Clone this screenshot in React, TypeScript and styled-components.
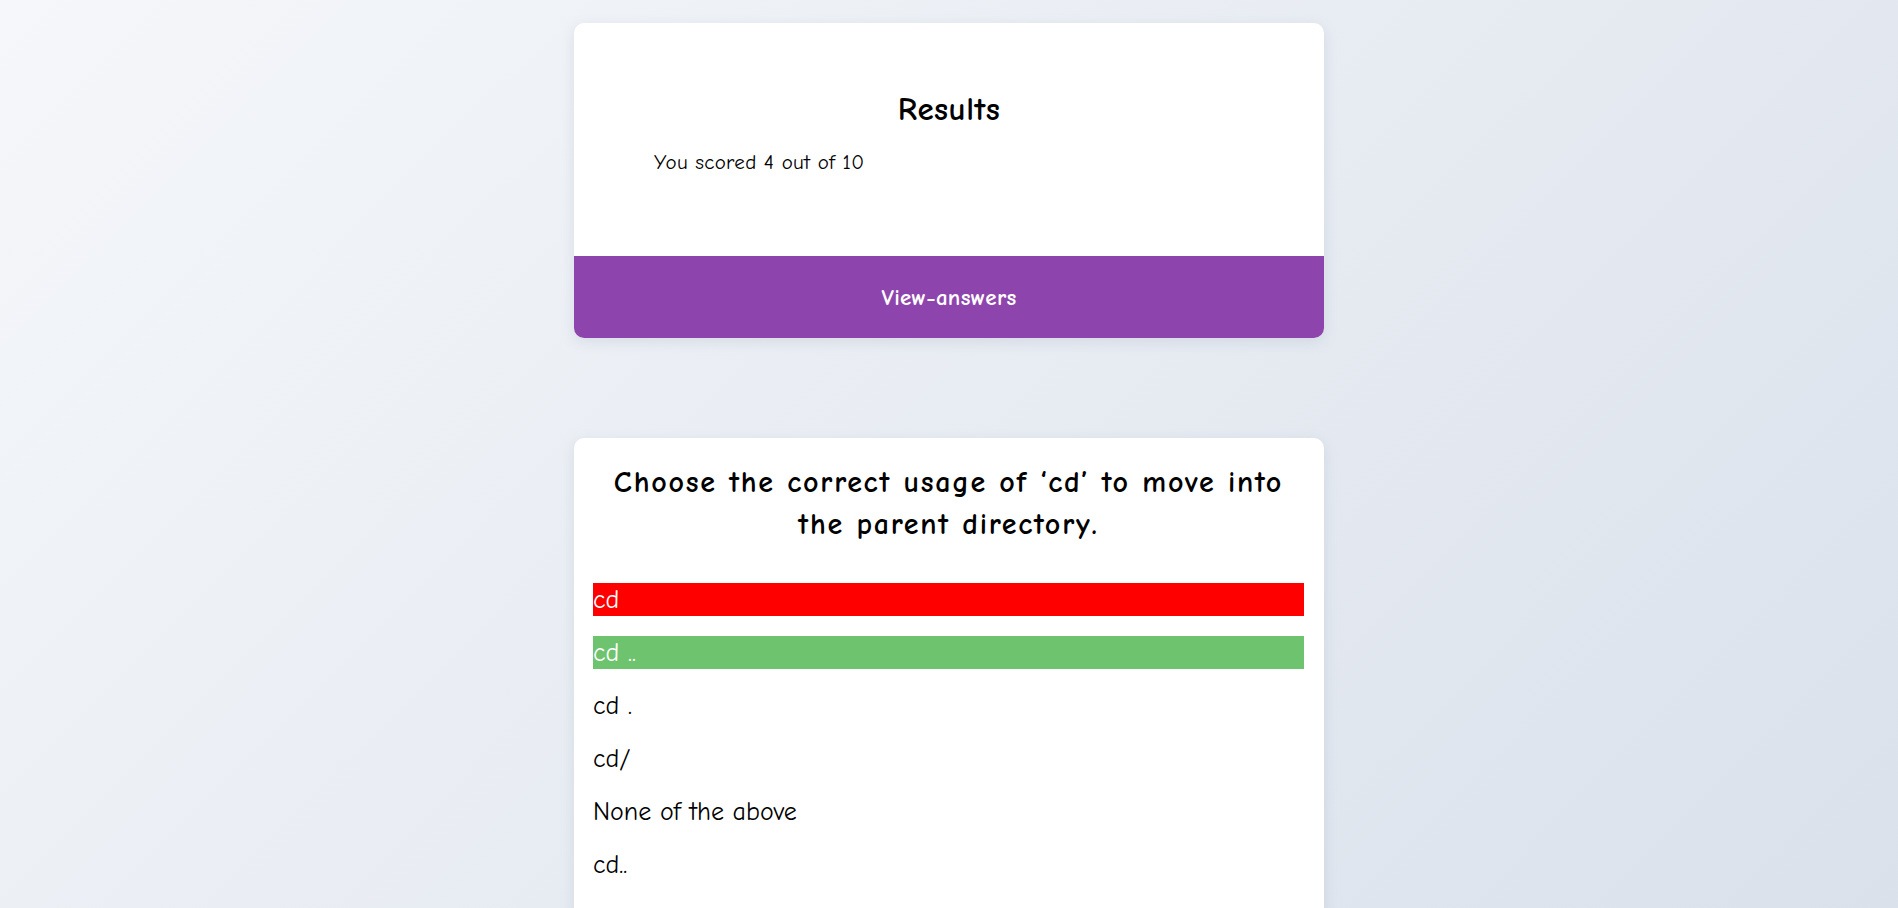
import React from "react";
import styled, { createGlobalStyle } from "styled-components";

const GlobalStyle = createGlobalStyle`
  html, body {
    margin: 0;
    padding: 0;
  }
  body {
    min-height: 100vh;
    background: linear-gradient(135deg, #f5f7fa 0%, #dae1eb 100%);
    background-attachment: fixed;
    font-family: "Comic Sans MS", "Comic Neue", "Chalkboard SE", cursive;
    color: #000;
  }
`;

const Page = styled.main`
  display: flex;
  flex-direction: column;
  align-items: center;
  gap: 100px;
  padding: 23px 0 60px;
`;

const Card = styled.section`
  width: 750px;
  background: #fff;
  border-radius: 10px;
  overflow: hidden;
  box-shadow: 0 4px 14px rgba(120, 135, 160, 0.18);
`;

const ResultBody = styled.div`
  height: 233px;
  box-sizing: border-box;
  padding: 66px 80px 0;
  display: flex;
  flex-direction: column;
`;

const ResultTitle = styled.h2`
  margin: 0;
  text-align: center;
  font-size: 33px;
  font-weight: 700;
  line-height: 40px;
  letter-spacing: 0.5px;
`;

const ScoreText = styled.p`
  margin: 19px 0 0;
  font-size: 21px;
  line-height: 28px;
  letter-spacing: 0.3px;
`;

const ViewButton = styled.button`
  display: block;
  width: 100%;
  height: 82px;
  border: none;
  background: #8e44ad;
  color: #fff;
  font-family: inherit;
  font-size: 23px;
  font-weight: 700;
  letter-spacing: 0.3px;
  cursor: pointer;
`;

const QuestionBody = styled.div`
  padding: 24px 20px 60px 19px;
`;

const Question = styled.h2`
  margin: 0 0 37px;
  padding: 0 10px;
  text-align: center;
  font-size: 30px;
  font-weight: 700;
  line-height: 42px;
  letter-spacing: 1.75px;
`;

const Options = styled.ul`
  list-style: none;
  margin: 0;
  padding: 0;
  display: flex;
  flex-direction: column;
  gap: 20px;
`;

const Option = styled.li<{ $state?: "wrong" | "right" }>`
  height: 33px;
  display: flex;
  align-items: center;
  font-size: 26px;
  color: ${(p) => (p.$state ? "#fff" : "#000")};
  background: ${(p) =>
    p.$state === "wrong" ? "#ff0000" : p.$state === "right" ? "#6ec36e" : "transparent"};
`;

const options: { text: string; state?: "wrong" | "right" }[] = [
  { text: "cd", state: "wrong" },
  { text: "cd ..", state: "right" },
  { text: "cd ." },
  { text: "cd/" },
  { text: "None of the above" },
  { text: "cd.." },
];

export default function App() {
  return (
    <>
      <GlobalStyle />
      <Page>
        <Card>
          <ResultBody>
            <ResultTitle>Results</ResultTitle>
            <ScoreText>You scored 4 out of 10</ScoreText>
          </ResultBody>
          <ViewButton>View-answers</ViewButton>
        </Card>
        <Card>
          <QuestionBody>
            <Question>Choose the correct usage of ‘cd’ to move into the parent directory.</Question>
            <Options>
              {options.map((o) => (
                <Option key={o.text} $state={o.state}>
                  {o.text}
                </Option>
              ))}
            </Options>
          </QuestionBody>
        </Card>
      </Page>
    </>
  );
}
